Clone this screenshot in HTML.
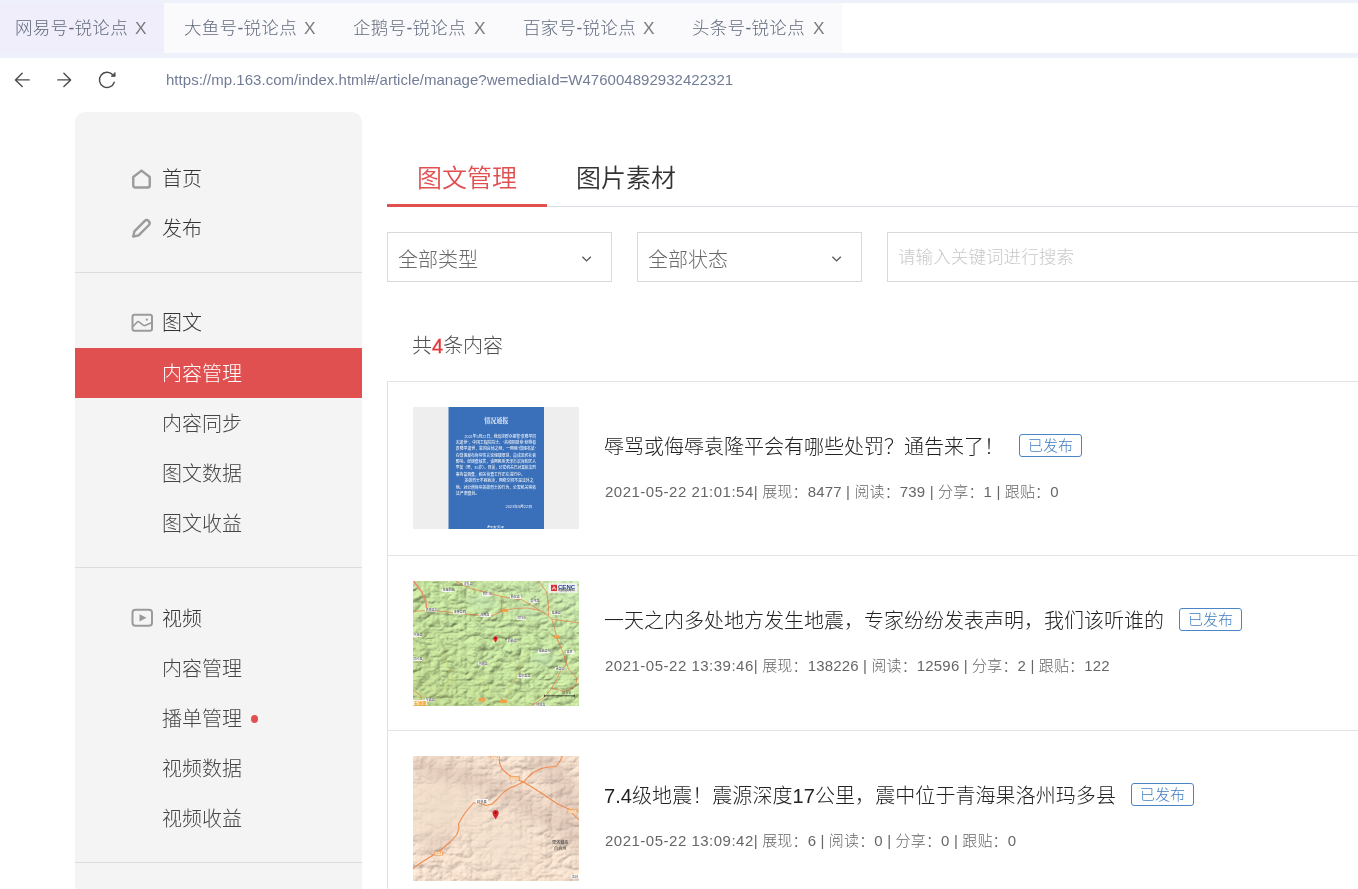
<!DOCTYPE html>
<html lang="zh-CN">
<head>
<meta charset="utf-8">
<title>网易号-锐论点</title>
<style>
*{box-sizing:border-box;margin:0;padding:0}
html,body{width:1358px;height:889px;overflow:hidden;background:#fff}
body{font-family:"Liberation Sans","Noto Sans CJK SC",sans-serif;font-weight:300;color:#333;position:relative;opacity:.999}
.abs{position:absolute}
/* browser chrome */
#chrome{position:absolute;left:0;top:0;width:1358px;height:58px;background:#eef1fa}
#tabwhite{position:absolute;left:842px;top:3px;width:516px;height:50px;background:#fff}
.tab{position:absolute;top:3px;height:50px;background:#fafafc;color:#616a7d;font-size:17.5px;line-height:50px;white-space:nowrap;letter-spacing:.3px}
.tab.on{background:#f0eefa}
.tab span.t{position:absolute;left:15px;top:0}
.tab span.x{position:absolute;top:.5px;font-size:16px;color:#7a7a7a;letter-spacing:0;font-weight:400;transform:scaleX(1.080);transform-origin:0 50%}
#urlbar{position:absolute;left:0;top:58px;width:1358px;height:44px;background:#fff}
#url{position:absolute;left:166px;top:70px;font-size:15px;line-height:20px;color:#727c96;white-space:nowrap;letter-spacing:.03px}
/* sidebar */
#side{position:absolute;left:75px;top:112px;width:287px;height:800px;background:#f4f4f4;border-radius:10px 10px 0 0}
.sline{position:absolute;left:0;width:287px;height:1px;background:#dcdcdc}
.mi{position:absolute;left:87px;font-size:20px;line-height:30px;color:#333;white-space:nowrap}
.mi.sub{color:#454545}
#act{position:absolute;left:0;top:236px;width:287px;height:50px;background:#e15050}
.ico{position:absolute}
/* main */
#tabs .tb{position:absolute;font-size:25px;line-height:36px;white-space:nowrap;font-weight:350}
.sel{position:absolute;top:232px;width:225px;height:50px;border:1px solid #d9d9d9;background:#fff;font-size:20px;line-height:54px;color:#6a6a6a;padding-left:10px;white-space:nowrap;overflow:hidden}
.row{position:absolute;left:387px;width:980px;border-top:1px solid #e4e4e4}
.title{position:absolute;left:604px;font-size:20px;line-height:28px;color:#222;white-space:nowrap}
.meta{position:absolute;left:605px;font-size:15px;line-height:20px;color:#666;white-space:nowrap}
.meta .dt{letter-spacing:.5px}
.meta{letter-spacing:.16px}
.badge{position:absolute;height:23px;border:1px solid #4a86c5;border-radius:3px;color:#3f7cc0;font-size:15px;line-height:21px;padding:0 8px;white-space:nowrap}
.thumb{position:absolute;left:413px;width:166px;overflow:hidden}
</style>
</head>
<body>
<!-- CHROME -->
<div id="chrome"></div>
<div id="tabwhite"></div>
<div class="tab on" style="left:0;width:164px"><span class="t">网易号-锐论点</span><span class="x" style="left:134.7px">X</span></div>
<div class="tab" style="left:164px;width:170px"><span class="t" style="left:20px">大鱼号-锐论点</span><span class="x" style="left:139.7px">X</span></div>
<div class="tab" style="left:334px;width:170px"><span class="t" style="left:19px">企鹅号-锐论点</span><span class="x" style="left:139.7px">X</span></div>
<div class="tab" style="left:504px;width:169px"><span class="t" style="left:19px">百家号-锐论点</span><span class="x" style="left:138.7px">X</span></div>
<div class="tab" style="left:673px;width:169px"><span class="t" style="left:19px">头条号-锐论点</span><span class="x" style="left:139.7px">X</span></div>
<div id="urlbar"></div>
<svg class="abs" style="left:10px;top:68px" width="120" height="24" viewBox="0 0 120 24" fill="none" stroke="#4a4a4a" stroke-width="1.400" stroke-linecap="round" stroke-linejoin="round">
  <path d="M19.150 11.900H5.450M12.200 5.350L5.450 11.900L12.200 18.450"/>
  <path d="M47.850 11.900H60.650M53.900 5.350L60.650 11.900L53.900 18.450"/>
  <path d="M102.650 6.800A7.600 7.600 0 1 0 104.230 14.250"/>
  <path d="M105.100 4.800V8.400H101.500Z" fill="#4a4a4a" stroke-width=".8"/>
</svg>
<div id="url">https://mp.163.com/index.html#/article/manage?wemediaId=W476004892932422321</div>

<!-- SIDEBAR -->
<div id="side">
  <div class="sline" style="top:160px"></div>
  <div class="sline" style="top:455px"></div>
  <div class="sline" style="top:750px"></div>
  <div id="act"></div>
  <div class="mi" style="top:52px">首页</div>
  <div class="mi" style="top:102px">发布</div>
  <div class="mi" style="top:196px">图文</div>
  <div class="mi" style="top:247px;color:#fff">内容管理</div>
  <div class="mi sub" style="top:297px">内容同步</div>
  <div class="mi sub" style="top:347px">图文数据</div>
  <div class="mi sub" style="top:397px">图文收益</div>
  <div class="mi" style="top:492px">视频</div>
  <div class="mi sub" style="top:542px">内容管理</div>
  <div class="mi sub" style="top:592px">播单管理</div>
  <div class="mi sub" style="top:642px">视频数据</div>
  <div class="mi sub" style="top:692px">视频收益</div>
  <div class="abs" style="left:176px;top:603px;width:7px;height:8px;border-radius:50%;background:#e15050"></div>
  <!-- icons -->
  <svg class="ico" style="left:55px;top:55px" width="24" height="24" viewBox="0 0 24 24" fill="none" stroke="#9b9b9b" stroke-width="2.400" stroke-linejoin="round"><path d="M3.250 10L11.500 3.600L19.750 10V18.500a2 2 0 0 1-2 2H5.250a2 2 0 0 1-2-2Z"/></svg>
  <svg class="ico" style="left:55px;top:104px" width="24" height="24" viewBox="0 0 24 24" fill="none" stroke="#9b9b9b" stroke-width="2.400" stroke-linejoin="round"><path d="M3.200 20.600L4.400 15.400L14.800 4.800A3 3 0 0 1 19 9L8.600 19.400Z"/></svg>
  <svg class="ico" style="left:55px;top:200px" width="24" height="22" viewBox="0 0 24 22" fill="none" stroke="#9b9b9b" stroke-width="2" stroke-linejoin="round"><rect x="2.500" y="2.800" width="19.500" height="16" rx="2"/><path d="M2.800 14.600L7 10.200Q8.100 9.200 9.300 10.100L13.200 13.200Q14.400 14 15.600 13.200L22 10.400" stroke-width="1.600"/><circle cx="16.800" cy="7.700" r="1.100" fill="#999" stroke="none"/></svg>
  <svg class="ico" style="left:55px;top:495px" width="24" height="22" viewBox="0 0 24 22" fill="none" stroke="#9b9b9b" stroke-width="2" stroke-linejoin="round"><rect x="2.500" y="2.800" width="19.500" height="16" rx="3"/><path d="M9.500 7.200L16.500 10.800L9.500 14.400Z" fill="#999" stroke="none"/></svg>
</div>

<!-- MAIN -->
<div id="tabs">
  <div class="tb" style="left:417px;top:160px;color:#e15050">图文管理</div>
  <div class="tb" style="left:576px;top:160px;color:#333">图片素材</div>
</div>
<div class="abs" style="left:387px;top:206px;width:971px;height:1px;background:#d9dde8"></div>
<div class="abs" style="left:387px;top:204px;width:160px;height:3px;background:#e15050"></div>

<div class="sel" style="left:387px">全部类型<svg class="abs" style="left:193px;top:20px" width="12" height="10" viewBox="0 0 12 10" fill="none" stroke="#555" stroke-width="1.300"><path d="M1.400 3.700L5.600 7.900L9.800 3.700"/></svg></div>
<div class="sel" style="left:637px">全部状态<svg class="abs" style="left:193px;top:20px" width="12" height="10" viewBox="0 0 12 10" fill="none" stroke="#555" stroke-width="1.300"><path d="M1.400 3.700L5.600 7.900L9.800 3.700"/></svg></div>
<div class="sel" style="left:887px;width:500px;color:#c8c8c8;font-size:17.500px;line-height:48px;letter-spacing:.1px">请输入关键词进行搜索</div>

<div class="abs" style="left:412px;top:331px;font-size:20px;line-height:30px;color:#505050;white-space:nowrap">共<span style="color:#e23838;-webkit-text-stroke:.3px #e23838">4</span>条内容</div>

<div class="abs" style="left:387px;top:381px;width:1px;height:520px;background:#e0e0e0"></div>
<div class="row" style="top:381px;height:174px"></div>
<div class="row" style="top:555px;height:175px"></div>
<div class="row" style="top:730px;height:175px"></div>

<!-- row 1 -->
<div class="thumb" id="th1" style="top:407px;height:122px;background:#eee">
<svg class="abs" style="left:0;top:0" width="166" height="122" viewBox="0 0 664 488" font-family="'Liberation Serif','Noto Serif CJK SC',serif">
  <rect x="142" y="0" width="382" height="488" fill="#3a70ba"/>
  <g fill="#fff" opacity=".88">
    <text x="333" y="64" font-size="25" font-weight="700" text-anchor="middle" textLength="96" lengthAdjust="spacingAndGlyphs">情况通报</text>
    <g font-family="'Liberation Sans','Noto Sans CJK SC',sans-serif" font-size="16.500" font-weight="500">
      <text x="206" y="122" textLength="286" lengthAdjust="spacingAndGlyphs">2021年5月22日，我局接群众报警“袁隆平同</text>
      <text x="171" y="147.500" textLength="321" lengthAdjust="spacingAndGlyphs">志逝世”，中国工程院院士、“共和国勋章”获得者</text>
      <text x="171" y="173" textLength="321" lengthAdjust="spacingAndGlyphs">袁隆平逝世，举国哀悼之际，一网民“微博名某”</text>
      <text x="171" y="198.500" textLength="321" lengthAdjust="spacingAndGlyphs">在微博发布侮辱性言论博取眼球，造成恶劣社会</text>
      <text x="171" y="224" textLength="321" lengthAdjust="spacingAndGlyphs">影响。经调查核实，该网民系天津市滨海新区人</text>
      <text x="171" y="249.500" textLength="321" lengthAdjust="spacingAndGlyphs">李某（男，35岁）。目前，公安机关已对其依法刑</text>
      <text x="171" y="275" textLength="276" lengthAdjust="spacingAndGlyphs">事拘留调查，相关侦查工作正在进行中。</text>
      <text x="206" y="300.500" textLength="276" lengthAdjust="spacingAndGlyphs">英雄烈士不容亵渎，网络空间不是法外之</text>
      <text x="171" y="326" textLength="321" lengthAdjust="spacingAndGlyphs">地。对公然侮辱英雄烈士的行为，公安机关将依</text>
      <text x="171" y="351.500" textLength="95" lengthAdjust="spacingAndGlyphs">法严肃查处。</text>
      <text x="370" y="405" textLength="106" font-size="15" lengthAdjust="spacingAndGlyphs">2021年5月22日</text>
      <text x="306" y="482" textLength="58" font-size="11" lengthAdjust="spacingAndGlyphs">平安天津</text>
    </g>
    <path d="M296 482l4-7 7-3-3 6 5 0-6 4z"/>
  </g>
</svg>
</div>
<div class="title" style="top:433px">辱骂或侮辱袁隆平会有哪些处罚？通告来了！</div>
<div class="badge" style="left:1019px;top:434px">已发布</div>
<div class="meta" style="top:482px"><span class="dt">2021-05-22 21:01:54</span>| 展现：8477 | 阅读：739 | 分享：1 | 跟贴：0</div>

<!-- row 2 -->
<div class="thumb" id="th2" style="top:581px;height:125px;background:#a9cf8f">
<svg class="abs" style="left:0;top:0" width="166" height="125" viewBox="0 0 166 125">
  <defs>
    <filter id="terr2" x="0" y="0" width="100%" height="100%" color-interpolation-filters="sRGB">
      <feTurbulence type="turbulence" baseFrequency="0.055 0.085" numOctaves="6" seed="3" result="n"/>
      <feDiffuseLighting in="n" surfaceScale="2.300" diffuseConstant="1.140" lighting-color="#c3e1a2"><feDistantLight azimuth="225" elevation="62"/></feDiffuseLighting>
    </filter>
  <linearGradient id="tint2" x1="0" y1="1" x2="1" y2="0"><stop offset="0" stop-color="#a9b45e" stop-opacity=".34"/><stop offset=".5" stop-color="#b4c878" stop-opacity=".16"/><stop offset="1" stop-color="#d6f2ca" stop-opacity=".45"/></linearGradient>
  <radialGradient id="lp2"><stop offset="0" stop-color="#c6e8b6" stop-opacity=".7"/><stop offset="1" stop-color="#c6e8b6" stop-opacity="0"/></radialGradient>
  </defs>
  <rect width="166" height="125" fill="#a9cf8f" filter="url(#terr2)"/>
  <rect width="166" height="125" fill="url(#tint2)"/>
  <ellipse cx="70" cy="21" rx="22" ry="12" fill="url(#lp2)"/><ellipse cx="131" cy="77" rx="16" ry="14" fill="url(#lp2)"/><ellipse cx="112" cy="30" rx="20" ry="9" fill="url(#lp2)"/>
  <g fill="none" stroke-linecap="round" stroke-linejoin="round">
    <path d="M29 73L36 90L37.500 99L29 110.500M68 97L73 110.500L71 125M112 72L105 90L96.500 107L91.500 125" stroke="#e6d86a" stroke-width=".5"/>
    <path d="M1 0.500L8.800 11L13 21L13.800 29.500" stroke="#f08a6e" stroke-width="1.500"/>
    <g stroke="#e9703e" stroke-width=".7" opacity=".9" stroke-dasharray="2.200 .5">
      <path d="M0 30.400L13.800 29.500L30.700 30.400L42.500 32L54.300 33.200L66.200 34.300L79.700 34.600L88 30.400L101.600 27.500L115 27L127 29.500L135.400 34.600L138.700 38L149 39.700L166 41.700"/>
      <path d="M42.500 0L57.700 7.600L74.600 11.800L88 15.200L96.500 17L108.400 18.600L120.200 25.300L127 29.500M88 15.200L88.800 23L88 30.400"/>
      <path d="M125.200 0L133.700 11L135.400 22.800L135.400 34.600M138.700 38L141.300 46.400L143.800 56.500L147.200 65L151.400 75L153 83.500L147.200 90.300L143.800 98.700L138.700 107.200L132 115.600L122 122.400L118 125"/>
      <path d="M151.400 75L155.600 88.600L164 97L162.400 105.500L152.200 110.500L138.700 107.200M0 109L7 114L10.500 122.400L11 125"/>
    </g>
  </g>
  <g fill="#fff" opacity=".92">
    <rect x="50" y="1" width="9" height="3.600" rx=".8"/><rect x="29" y="7.500" width="12" height="3.600" rx=".8"/><rect x="69" y="11.600" width="9.500" height="3.600" rx=".8"/>
    <rect x="97" y="14.300" width="11" height="3.600" rx=".8"/><rect x="116.500" y="18.500" width="9" height="3.600" rx=".8"/><rect x="12" y="27" width="12.500" height="3.600" rx=".8"/>
    <rect x="40" y="29.500" width="12" height="3.600" rx=".8"/><rect x="66.500" y="32.500" width="11.500" height="3.600" rx=".8"/><rect x="103.500" y="35.300" width="9.500" height="3.600" rx=".8"/>
    <rect x="138" y="30.300" width="9.500" height="3.600" rx=".8"/><rect x="0" y="52.300" width="9" height="3.600" rx=".8"/><rect x="94" y="57.800" width="9.500" height="3.600" rx=".8"/>
    <rect x="125" y="68.600" width="12" height="3.600" rx=".8"/><rect x="153" y="69.600" width="8.500" height="3.600" rx=".8"/><rect x="0" y="76.400" width="9.500" height="3.600" rx=".8"/>
    <rect x="65" y="81" width="9.500" height="3.600" rx=".8"/><rect x="142" y="86" width="9.500" height="3.600" rx=".8"/><rect x="104.500" y="93.600" width="12.500" height="3.600" rx=".8"/>
    <rect x="12" y="117" width="9.500" height="3.600" rx=".8"/><rect x="122.500" y="122" width="10" height="3.600" rx=".8"/>
  </g>
  <g transform="scale(.25)" font-family="'Liberation Sans','Noto Sans CJK SC',sans-serif" font-size="12" font-weight="500" fill="#555">
    <text x="203" y="15">尖扎县</text><text x="119" y="41">化隆回族</text><text x="279" y="57.500">同仁市</text><text x="391" y="68.500">循化县</text><text x="469" y="85">夏河县</text>
    <text x="51" y="119">贵南县北</text><text x="163" y="129">泽库县西</text><text x="269" y="141">泽库县</text><text x="417" y="152">合作市</text><text x="555" y="132">临潭县</text>
    <text x="2" y="220">兴海县</text><text x="379" y="242">玛曲县</text><text x="503" y="285">碌曲县东</text><text x="614" y="289">卓尼</text><text x="2" y="316.500">玛沁县</text>
    <text x="263" y="335">河南县</text><text x="571" y="355">迭部县</text><text x="421" y="385.500">若尔盖县</text><text x="51" y="479">甘德县</text><text x="493" y="499">阿坝县</text>
  </g>
  <g fill="#f2a04a"><rect x="89" y="28" width="6" height="3" rx=".6"/><rect x="141" y="54.600" width="5.500" height="3" rx=".6"/><rect x="65.500" y="117" width="7" height="3.200" rx=".6"/><rect x="87" y="118.800" width="7" height="3.200" rx=".6"/></g>
  <path d="M82.500 61.600c-1.200-2-2.100-3-2.100-4.300a2.100 2.100 0 0 1 4.200 0c0 1.300-.9 2.300-2.100 4.300z" fill="#e0262a"/><circle cx="82.500" cy="57.200" r=".8" fill="#6a1012"/>
  <rect x="135.300" y="2.200" width="28.800" height="9.600" fill="#f2f2f2"/>
  <rect x="138" y="3.800" width="6" height="6.300" fill="#d8322f"/><path d="M139 9l2-3.500 2 3.500M139.500 7.300h3" stroke="#fff" stroke-width=".6" fill="none"/>
  <text x="145" y="7.900" font-family="'Liberation Sans',sans-serif" font-weight="700" font-size="5.400" fill="#1a458f" textLength="17.100" lengthAdjust="spacingAndGlyphs">CENC</text>
  <g transform="scale(.25)"><text x="580" y="39.600" font-family="'Liberation Sans','Noto Sans CJK SC',sans-serif" font-weight="700" font-size="7.500" fill="#333" textLength="69" lengthAdjust="spacingAndGlyphs">中国地震台网中心</text></g>
  <path d="M131.400 114.800h30M131.400 113.600v2.400M161.400 113.600v2.400" stroke="#111" stroke-width=".7" fill="none"/>
  <g transform="scale(.25)"><text x="596" y="452" font-family="'Liberation Sans','Noto Sans CJK SC',sans-serif" font-size="11" fill="#333">50 公里</text></g>
  <rect x="0" y="118.800" width="14" height="5.400" fill="#fff" opacity=".85"/>
  <g transform="scale(.25)"><text x="3" y="494" font-family="'Liberation Sans','Noto Sans CJK SC',sans-serif" font-size="17" font-weight="700" fill="#f39a1e">天地图</text></g>
</svg>
</div>
<div class="title" style="top:607px">一天之内多处地方发生地震，专家纷纷发表声明，我们该听谁的</div>
<div class="badge" style="left:1179px;top:608px">已发布</div>
<div class="meta" style="top:656px"><span class="dt">2021-05-22 13:39:46</span>| 展现：138226 | 阅读：12596 | 分享：2 | 跟贴：122</div>

<!-- row 3 -->
<div class="thumb" id="th3" style="top:756px;height:125px;background:#ecd9c4">
<svg class="abs" style="left:0;top:0" width="166" height="125" viewBox="0 0 166 125">
  <defs>
    <filter id="terr3" x="0" y="0" width="100%" height="100%" color-interpolation-filters="sRGB">
      <feTurbulence type="turbulence" baseFrequency="0.05 0.07" numOctaves="5" seed="21" result="n"/>
      <feDiffuseLighting in="n" surfaceScale="1.700" diffuseConstant="1.110" lighting-color="#f4e0cd"><feDistantLight azimuth="225" elevation="64"/></feDiffuseLighting>
    </filter>
    <radialGradient id="flat3" gradientUnits="userSpaceOnUse" cx="28" cy="52" r="52" gradientTransform="translate(28 52) scale(1 .8) translate(-28 -52)"><stop offset="0" stop-color="#f0ddc9" stop-opacity=".85"/><stop offset=".6" stop-color="#f0ddc9" stop-opacity=".6"/><stop offset="1" stop-color="#f0ddc9" stop-opacity="0"/></radialGradient><radialGradient id="flat3b" gradientUnits="userSpaceOnUse" cx="92" cy="88" r="44"><stop offset="0" stop-color="#f2e0ce" stop-opacity=".8"/><stop offset="1" stop-color="#f0ddc9" stop-opacity="0"/></radialGradient>
  <filter id="bl3" x="-20%" y="-20%" width="140%" height="140%"><feGaussianBlur stdDeviation="6"/></filter>
  </defs>
  <rect width="166" height="125" fill="#ecd9c4" filter="url(#terr3)"/>
  <rect width="166" height="125" fill="#f2dccb" opacity=".3"/><rect width="166" height="125" fill="url(#flat3)"/><rect width="166" height="125" fill="url(#flat3b)"/>
  <g filter="url(#bl3)" fill="none" stroke="#c3a69c" opacity=".33" stroke-linecap="round"><path d="M8 10L55 20L100 40L135 62L166 85" stroke-width="20"/><path d="M130 5L150 30L160 55" stroke-width="26"/><path d="M15 92L30 84" stroke-width="14"/></g>
  <g fill="none" stroke="#f08a4e" stroke-width="1.050" stroke-linecap="round" stroke-linejoin="round">
    <path d="M0 112.500L6 108L17 101L28 94L37 86L43.500 79L46 73L45.500 68L48.500 62.500L52 57L57 51L60.500 47L66 46.500L73 49.500L79 48L84.500 43L91 36L97 32L104 29L110.500 26L115 21L121 16L128 12.500L136 11L143 10.500L147 5L149.500 0"/>
    <path d="M86 0L86.500 7L89 13L95 18.500L103 23L110.500 26L118 30.500L126 35.500L135 41.500L143 47L150 50.500L157 53.500L160 58L166 64"/>
  </g>
  <g fill="#f4a862"><rect x="77" y="-.6" width="10" height="3" rx=".6"/><rect x="96.500" y="20" width="10.500" height="4" rx=".7"/><rect x="154.500" y="53" width="10.500" height="4" rx=".7"/><rect x="21" y="95.500" width="9.500" height="4" rx=".7"/></g>
  <rect x="62.500" y="43" width="13" height="4.300" rx=".8" fill="#fff" opacity=".9"/>
  <rect x="157.500" y="118.500" width="8.500" height="4.300" rx=".8" fill="#fff" opacity=".9"/>
  <g transform="scale(.25)" font-family="'Liberation Sans','Noto Sans CJK SC',sans-serif" font-weight="500" fill="#444">
    <text x="256" y="186" font-size="13">玛多县</text>
    <text x="556" y="350" font-size="16.500">果洛藏族</text>
    <text x="564" y="374" font-size="16.500">自治州</text>
    <text x="636" y="488" font-size="12">达日</text>
    <g fill="#fff" font-size="11" font-weight="700"><text x="311" y="11">G0613</text><text x="389" y="94">G0613</text><text x="621" y="226">G0615</text><text x="89" y="396">G214</text></g>
  </g>
  <path d="M82.600 63.300c-1.800-3-3.100-4.400-3.100-6.300a3.100 3.100 0 0 1 6.200 0c0 1.900-1.300 3.300-3.100 6.300z" fill="#de2328"/><circle cx="82.600" cy="56.800" r="1.100" fill="#7a1114"/>
</svg>
</div>
<div class="title" style="top:782px;letter-spacing:.07px">7.4级地震！震源深度17公里，震中位于青海果洛州玛多县</div>
<div class="badge" style="left:1131px;top:783px">已发布</div>
<div class="meta" style="top:831px"><span class="dt">2021-05-22 13:09:42</span>| 展现：6 | 阅读：0 | 分享：0 | 跟贴：0</div>

</body>
</html>
